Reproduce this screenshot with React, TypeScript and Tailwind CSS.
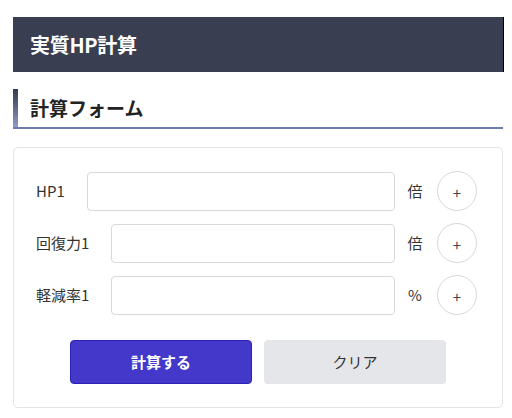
import React from "react";

const font = { fontFamily: '"Noto Sans CJK JP", "Noto Sans", sans-serif' };

function Row({ label, unit }: { label: string; unit: string }) {
  return (
    <div className="flex items-center h-10">
      <span className="text-[15px] text-[#333] mr-[22px] whitespace-nowrap">{label}</span>
      <div className="flex-1 h-[39px] border border-[#d6d8dd] rounded-[4px] bg-white" />
      <span className="text-[15px] text-[#333] w-4 ml-3 mr-[14px] text-center">{unit}</span>
      <div className="w-10 h-10 rounded-full border border-[#d6d8dd] bg-white flex items-center justify-center text-[15px] text-[#444] pt-[4px]">
        +
      </div>
    </div>
  );
}

export default function App() {
  return (
    <div className="bg-white min-h-[418px] pt-[17px]" style={font}>
      <div className="ml-[13px] w-[491px] h-[55px] bg-[#393e51] border-r border-black flex items-center pl-[17px]">
        <h1 className="text-white text-[20px] font-bold leading-none tracking-[-0.3px]">実質HP計算</h1>
      </div>
      <div className="ml-[13px] w-[490px] mt-[17px] h-[40px] flex border-b-2 border-[#6e7bae]">
        <div className="w-[5px] bg-gradient-to-b from-[#353a4f] to-[#8f9bcb]" />
        <h2 className="ml-3 flex items-center text-[19px] font-bold text-[#222] leading-none pb-[1px]">計算フォーム</h2>
      </div>
      <div className="ml-[13px] w-[490px] mt-[18px] border border-[#e3e4e8] rounded-[5px] pt-[23px] pb-[23px] pl-[22px] pr-[25px] flex flex-col">
        <div className="flex flex-col gap-3">
          <Row label="HP1" unit="倍" />
          <Row label="回復力1" unit="倍" />
          <Row label="軽減率1" unit="%" />
        </div>
        <div className="flex justify-center gap-3 mt-[25px] pl-[3px]">
          <button className="w-[182px] h-[44px] rounded-[4px] bg-[#4338ca] border border-[#2c22b5] text-white text-[15px] font-bold">
            計算する
          </button>
          <button className="w-[182px] h-[44px] rounded-[4px] bg-[#e5e6ea] text-[#333] text-[15px]">
            クリア
          </button>
        </div>
      </div>
    </div>
  );
}
